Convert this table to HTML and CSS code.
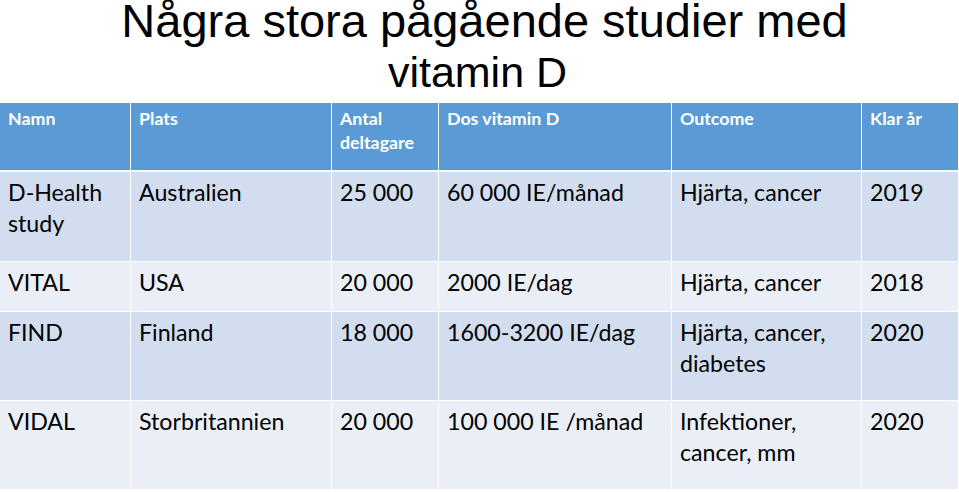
FILE: index.html
```html
<!DOCTYPE html>
<html lang="sv">
<head>
<meta charset="utf-8">
<title>Några stora pågående studier med vitamin D</title>
<link rel="stylesheet" href="styles.css">
</head>
<body>
<h1 class="title">Några stora pågående studier med<br><span class="line2">vitamin D</span></h1>
<table class="studies">
  <colgroup>
    <col class="c1"><col class="c2"><col class="c3"><col class="c4"><col class="c5"><col class="c6">
  </colgroup>
  <thead>
    <tr class="head">
      <th>Namn</th><th>Plats</th><th>Antal deltagare</th><th>Dos vitamin D</th><th>Outcome</th><th>Klar år</th>
    </tr>
  </thead>
  <tbody>
    <tr class="odd first">
      <td>D-Health study</td><td>Australien</td><td>25 000</td><td>60 000 IE/månad</td><td>Hjärta, cancer</td><td>2019</td>
    </tr>
    <tr class="even short">
      <td>VITAL</td><td>USA</td><td>20 000</td><td>2000 IE/dag</td><td>Hjärta, cancer</td><td>2018</td>
    </tr>
    <tr class="odd tall">
      <td>FIND</td><td>Finland</td><td>18 000</td><td>1600-3200 IE/dag</td><td>Hjärta, cancer, diabetes</td><td>2020</td>
    </tr>
    <tr class="even tall">
      <td>VIDAL</td><td>Storbritannien</td><td>20 000</td><td>100 000 IE /månad</td><td>Infektioner, cancer, mm</td><td>2020</td>
    </tr>
  </tbody>
</table>
</body>
</html>
```
FILE: styles.css
```css
html, body {
  margin: 0;
  padding: 0;
  background: #ffffff;
}
.title {
  margin: -4px 0 0 0;
  padding-left: 10px;
  font-family: "Liberation Sans", Arial, sans-serif;
  font-weight: normal;
  font-size: 47px;
  line-height: 50px;
  text-align: center;
  color: #000000;
  height: 107px;
  box-sizing: border-box;
}
.line2 {
  display: inline-block;
  margin-left: -14px;
  font-size: 43px;
  letter-spacing: 0;
}
.studies {
  width: 958px;
  table-layout: fixed;
  border-collapse: separate;
  border-spacing: 0;
  font-family: Lato, "Open Sans", sans-serif;
  color: #000000;
}
.c1 { width: 131px; }
.c2 { width: 201px; }
.c3 { width: 107px; }
.c4 { width: 233px; }
.c5 { width: 190px; }
.c6 { width: 96px; }
.studies th, .studies td {
  text-align: left;
  vertical-align: top;
  border-right: 1px solid #ffffff;
  border-bottom: 1px solid #ffffff;
  padding: 0 4px 0 8px;
  box-sizing: border-box;
}
.studies th:last-child, .studies td:last-child {
  border-right: none;
}
.head th {
  background: #5b9bd5;
  color: #ffffff;
  font-weight: bold;
  font-size: 17.8px;
  line-height: 24px;
  height: 69px;
  padding-top: 3px;
  border-bottom: 2px solid #ffffff;
}
.studies td {
  font-size: 23.2px;
  line-height: 31px;
  padding-top: 5px;
}
.odd td { background: #d2deef; }
.even td { background: #eaeff7; }
.first td { height: 90px; }
.tall td { height: 89px; }
.short td { height: 50px; }
```
